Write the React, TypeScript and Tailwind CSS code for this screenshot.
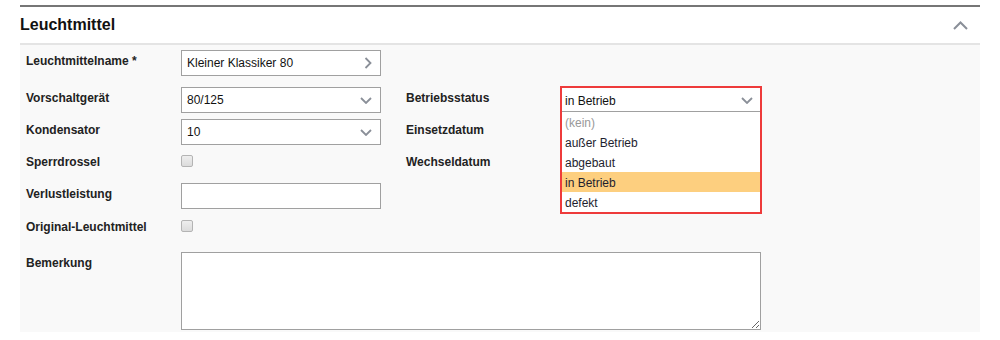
const font = { fontFamily: '"Liberation Sans", Arial, sans-serif' };

function ChevronDown() {
  return (
    <svg width="12" height="7" viewBox="0 0 12 7" className="shrink-0">
      <path d="M1 1l5 5 5-5" fill="none" stroke="#8a8f98" strokeWidth="1.8" />
    </svg>
  );
}

function ChevronRight() {
  return (
    <svg width="8" height="12" viewBox="0 0 8 12" className="shrink-0">
      <path d="M1.5 1l5 5-5 5" fill="none" stroke="#8a8f98" strokeWidth="1.8" />
    </svg>
  );
}

function Label({ children }: { children: React.ReactNode }) {
  return (
    <div className="w-[155px] shrink-0 pt-[4px] text-[12px] leading-[14px] font-bold text-[#222]">
      {children}
    </div>
  );
}

function Box({ children, icon }: { children?: React.ReactNode; icon?: React.ReactNode }) {
  return (
    <div className="flex h-[26px] w-[200px] items-center justify-between border border-[#a0a0a0] bg-white pl-[5px] pr-[8px] text-[12px] text-[#111]">
      <span>{children}</span>
      {icon}
    </div>
  );
}

function Checkbox() {
  return (
    <div className="mt-[4px] h-[12px] w-[12px] rounded-[2px] border border-[#b4b4b4] bg-gradient-to-b from-[#eeeeee] to-[#dcdcdc]" />
  );
}

const options = ["(kein)", "außer Betrieb", "abgebaut", "in Betrieb", "defekt"];

export default function App() {
  return (
    <div className="bg-white pt-[5px] pl-[20px] h-[340px]" style={font}>
      <div className="w-[960px]">
        <div className="border-t-2 border-[#767676]" />
        <div className="flex h-[36px] items-center justify-between pr-[12px]">
          <h2 className="text-[16px] font-bold text-[#111]">Leuchtmittel</h2>
          <svg width="15" height="9" viewBox="0 0 15 9">
            <path d="M1 8l6.5-6.5L14 8" fill="none" stroke="#8a8f98" strokeWidth="2" />
          </svg>
        </div>
        <div className="border-t-2 border-[#e4e4e4]" />
        <div className="bg-[#f9f9f9] pl-[6px] pt-[5px] h-[287px]">
          <div className="flex h-[37px]">
            <Label>Leuchtmittelname *</Label>
            <Box icon={<ChevronRight />}>Kleiner Klassiker 80</Box>
          </div>
          <div className="flex h-[32px]">
            <Label>Vorschaltgerät</Label>
            <Box icon={<ChevronDown />}>80/125</Box>
            <div className="ml-[25px] flex">
              <Label>Betriebsstatus</Label>
              <div className="relative h-[26px] w-[202px]">
                <div className="absolute left-[-1px] top-[-1px] z-10 w-[202px] border-2 border-[#ee3b3b] bg-white text-[12px]">
                  <div className="flex h-[24px] items-center justify-between border-b border-[#a0a0a0] pl-[3px] pr-[7px] pt-[2px] text-[#111]">
                    <span>in Betrieb</span>
                    <ChevronDown />
                  </div>
                  {options.map((o, i) => (
                    <div
                      key={o}
                      className={
                        "flex h-[20px] items-center pl-[3px] pt-[2px] " +
                        (i === 0 ? "text-[#999]" : "text-[#1e1e2e]") +
                        (o === "in Betrieb" ? " bg-[#fdcf7f]" : "")
                      }
                    >
                      {o}
                    </div>
                  ))}
                </div>
              </div>
            </div>
          </div>
          <div className="flex h-[32px]">
            <Label>Kondensator</Label>
            <Box icon={<ChevronDown />}>10</Box>
            <div className="ml-[25px] flex">
              <Label>Einsetzdatum</Label>
            </div>
          </div>
          <div className="flex h-[32px]">
            <Label>Sperrdrossel</Label>
            <div className="w-[200px]">
              <Checkbox />
            </div>
            <div className="ml-[25px] flex">
              <Label>Wechseldatum</Label>
            </div>
          </div>
          <div className="flex h-[33px]">
            <Label>Verlustleistung</Label>
            <Box />
          </div>
          <div className="flex h-[36px]">
            <Label>Original-Leuchtmittel</Label>
            <Checkbox />
          </div>
          <div className="flex">
            <Label>Bemerkung</Label>
            <textarea className="block h-[78px] w-[580px] border border-[#a0a0a0] bg-white" />
          </div>
        </div>
      </div>
    </div>
  );
}
